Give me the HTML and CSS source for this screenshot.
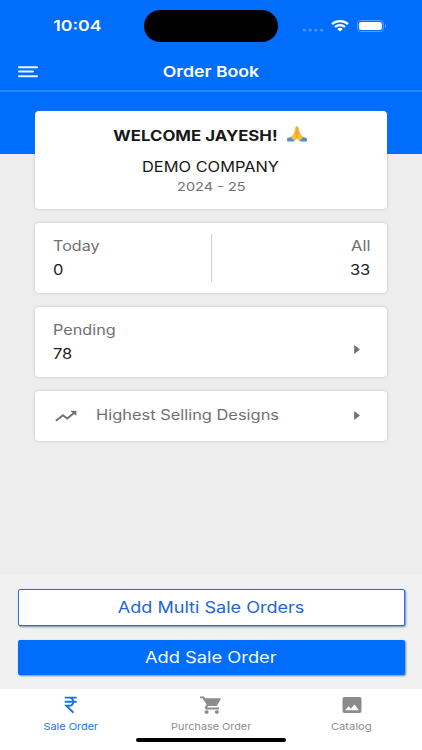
FILE: index.html
```html
<!DOCTYPE html>
<html lang="en">
<head>
<meta charset="utf-8">
<meta name="viewport" content="width=device-width, initial-scale=1">
<title>Order Book</title>
<link rel="stylesheet" href="styles.css">
</head>
<body>
<div class="app">
  <header class="header">
    <div class="status">
      <div class="time"><span class="t t-time">10:04</span></div>
      <div class="island"></div>
      <div class="indicators">
        <svg class="dots" width="22" height="4" viewBox="0 0 22 4" fill="#3f91fb"><rect x="0.5" y="0.7" width="3.8" height="2.7" rx="1.3"/><rect x="6.2" y="0.7" width="3.8" height="2.7" rx="1.3"/><rect x="12" y="0.7" width="3.8" height="2.7" rx="1.3"/><rect x="17.7" y="0.7" width="3.8" height="2.7" rx="1.3"/></svg>
        <svg class="wifi" width="18" height="12" viewBox="0 0 18 12" fill="none" stroke="#fff" stroke-width="2.2"><path d="M1 4.1C5.4.2 12.6.2 17 4.1"/><path d="M3.9 7C6.8 4.5 11.2 4.5 14.1 7"/><path d="M6.2 8.9C7.8 7.5 10.2 7.5 11.8 8.9L9 11.4z" fill="#fff" stroke="none"/></svg>
        <svg class="battery" width="30" height="12" viewBox="0 0 30 12"><rect x=".5" y=".5" width="26" height="11" rx="3.4" fill="none" stroke="#58a0ff"/><rect x="2" y="2" width="23" height="8" rx="2.3" fill="#fff"/><path d="M28 4c1.5.5 1.5 3.5 0 4z" fill="#71adff"/></svg>
      </div>
    </div>
    <nav class="navbar">
      <svg class="menu" width="20" height="12" viewBox="0 0 20 12" fill="none" stroke="#e5f3ff" stroke-width="2" stroke-linecap="round"><path d="M1 1.2h18M1 5.6h14M1 10.2h18"/></svg>
      <h1 class="title"><span class="t t-title">Order Book</span></h1>
    </nav>
  </header>
  <main class="content">
    <section class="card welcome">
      <div class="hello">
        <span class="t t-hello">WELCOME JAYESH!</span>
        <svg class="hands" width="20" height="16" viewBox="0 0 20 16"><path d="M0 12.3l5-1.7 3.3 2.8-1.5 2H.2zM20 12.3l-5-1.7-3.3 2.8 1.5 2h6.6z" fill="#4f91cf"/><path d="M8.7.8C9.4-.1 10.6-.1 11.3.8l2 6.9 3 3.6-4 3.6L10 12.6l-2.3 2.3-4-3.6 3-3.6z" fill="#f8bd3d"/><path d="M10 .9v11.4M7.3 8l2-1.5M12.7 8l-2-1.5" stroke="#d98b22" stroke-width=".7" fill="none"/></svg>
      </div>
      <div class="company"><span class="t t-company">DEMO COMPANY</span></div>
      <div class="year"><span class="t t-year">2024 - 25</span></div>
    </section>
    <section class="card totals">
      <div class="stat"><span class="t label t-today">Today</span><span class="t value t-zero">0</span></div>
      <div class="divider"></div>
      <div class="stat right"><span class="t label t-all">All</span><span class="t value t-33">33</span></div>
    </section>
    <section class="card pending">
      <div class="stat"><span class="t label t-pending">Pending</span><span class="t value t-78">78</span></div>
      <svg class="caret" width="6" height="9" viewBox="0 0 6 9"><path d="M.2 0L5.9 4.5.2 9z" fill="#707070"/></svg>
    </section>
    <section class="card designs">
      <svg class="trend" width="22" height="12" viewBox="0 0 22 12" fill="none" stroke="#707070" stroke-width="1.9"><path d="M.8 10.8L8 5.3l4.2 3.2L19.7 2.4"/><path d="M15 .7h6.4v5.1z" fill="#707070" stroke="none"/></svg>
      <span class="t label t-designs">Highest Selling Designs</span>
      <svg class="caret" width="6" height="9" viewBox="0 0 6 9"><path d="M.2 0L5.9 4.5.2 9z" fill="#707070"/></svg>
    </section>
  </main>
  <div class="actions">
    <button class="btn outline"><span class="t t-multi">Add Multi Sale Orders</span></button>
    <button class="btn solid"><span class="t t-add">Add Sale Order</span></button>
  </div>
  <footer class="tabbar">
    <div class="tabs">
      <div class="tab active">
        <svg width="24" height="20" viewBox="0 0 24 20" fill="none" stroke="#1a73e8" stroke-width="1.9"><path d="M6.7 2.6h12M6.7 6.7h12M6.7 2.6h4.4c5.4 0 5.4 8.2 0 8.2H8.3l7.2 7"/></svg>
        <span class="t t-sale">Sale Order</span>
      </div>
      <div class="tab">
        <svg width="24" height="20" viewBox="0 0 24 20" fill="#8b8b8d"><path d="M1 1.5h3.9l1 1.7h14.9c.8 0 1.1.6.8 1.2l-3.4 5.8c-.4.6-1 .9-1.8.9H9l-1 1.5h12v1.8H7.8c-1.7 0-2.5-1.5-1.7-2.7l1.5-2.2L3.4 3.2H1z"/><ellipse cx="7.6" cy="17.1" rx="2.1" ry="1.8"/><ellipse cx="17.9" cy="17.1" rx="2.1" ry="1.8"/></svg>
        <span class="t t-purchase">Purchase Order</span>
      </div>
      <div class="tab">
        <svg width="24" height="20" viewBox="0 0 24 20"><rect x="2.5" y="2" width="19" height="16" rx="2" fill="#8b8b8d"/><path d="M5.2 15.2l3.4-3.9 2.3 2.5 3.5-4.4 4.6 5.8z" fill="#fff"/></svg>
        <span class="t t-catalog">Catalog</span>
      </div>
    </div>
    <div class="home"></div>
  </footer>
</div>
</body>
</html>
```
FILE: styles.css
```css
* { box-sizing: border-box; }
body { margin: 0; font-family: Inter, "Liberation Sans", sans-serif; }
svg { display: block; flex: none; }

.app {
  width: 422px;
  height: 750px;
  display: flex;
  flex-direction: column;
  overflow: hidden;
  background: linear-gradient(#006dfc 154px, #ededed 154px);
}

/* Wide letterforms: each label is stretched horizontally. */
.t {
  display: inline-block;
  white-space: nowrap;
  transform: scaleX(var(--w, 1.18));
}
.t-hello { --w: 1.2; }
.t-company { --w: 1.17; }
.t-year { --w: 1.21; }
.t-today { --w: 1.15; }
.t-pending { --w: 1.16; }
.t-multi { --w: 1.165; }
.t-sale { --w: 1.15; }
.t-purchase { --w: 1.14; }

.header { height: 92px; border-bottom: 2px solid #2c83fa; color: #fff; }
.status { height: 52px; display: grid; grid-template-columns: 144px 134px 144px; align-items: center; }
.time { padding-left: 10px; text-align: center; font-size: 15px; font-weight: 600; line-height: 20px; }
.island { height: 32px; border-radius: 16px; background: #000; }
.indicators { display: flex; align-items: center; padding-left: 24px; }
.dots { margin-top: 7px; }
.wifi { margin-left: 7px; }
.battery { margin-left: 8px; }
.navbar { height: 39px; display: grid; grid-template-columns: 1fr auto 1fr; align-items: center; }
.menu { margin-left: 18px; }
.title { margin: 0; font-size: 15px; font-weight: 600; line-height: 20px; }

.content { flex: 1; padding: 19px 35px 0; display: flex; flex-direction: column; gap: 14px; }
.card {
  width: 352px;
  background: #fff;
  border-radius: 4px;
  box-shadow: 0 0 2px 1px rgba(120, 130, 140, 0.2);
}
.welcome { height: 97.5px; padding-top: 14px; color: #171717; text-align: center; }
.hello { height: 20px; padding-left: 12px; display: flex; align-items: center; justify-content: center; gap: 24px; font-size: 14px; font-weight: 700; }
.hands { margin-top: -3px; }
.company { margin-top: 12px; font-size: 14px; line-height: 20px; }
.year { margin-top: 1px; font-size: 12px; line-height: 18px; color: #737373; }

.totals, .pending { height: 70px; display: flex; justify-content: space-between; padding: 11px 17px 11px 18px; }
.stat { flex: 1; display: flex; flex-direction: column; align-items: flex-start; line-height: 24px; }
.stat .t { transform-origin: left; }
.stat.right { align-items: flex-end; }
.stat.right .t { transform-origin: right; }
.label { color: #707070; font-size: 14px; }
.value { color: #1c1c1c; font-size: 14px; }
.divider { width: 1px; background: #cfcfd1; }
.pending .caret { align-self: flex-end; margin: 0 10px 12px 0; }
.designs { height: 50px; display: flex; align-items: center; padding: 0 27px 0 20px; }
.t-designs { --w: 1.172; margin: 0 auto 2px 19px; transform-origin: left; }

.actions { height: 114px; padding: 14px 17.5px 0; display: flex; flex-direction: column; gap: 14px; background: #f1f1f1; }
.btn { border: 0; padding: 0; width: 387px; border-radius: 2px; font: 400 15.5px/20px Inter, sans-serif; box-shadow: 1px 1px 2px rgba(40, 80, 150, 0.65); }
.outline { height: 37px; padding-top: 1px; background: #fff; border: 1px solid #2f70d6; color: #1d66d7; }
.solid { height: 35px; padding-top: 1px; background: #006dfc; color: #f4faff; }

.tabbar { height: 61px; background: #fff; }
.tabs { height: 49px; padding-top: 6px; display: grid; grid-template-columns: repeat(3, 140.67px); }
.tab { display: flex; flex-direction: column; align-items: center; font-size: 9.5px; line-height: 14px; color: #8e8e90; }
.tab .t { margin-top: 5px; }
.active { color: #1a73e8; }
.home { width: 150px; height: 4px; margin: 0 auto; border-radius: 2px; background: #000; }
```
